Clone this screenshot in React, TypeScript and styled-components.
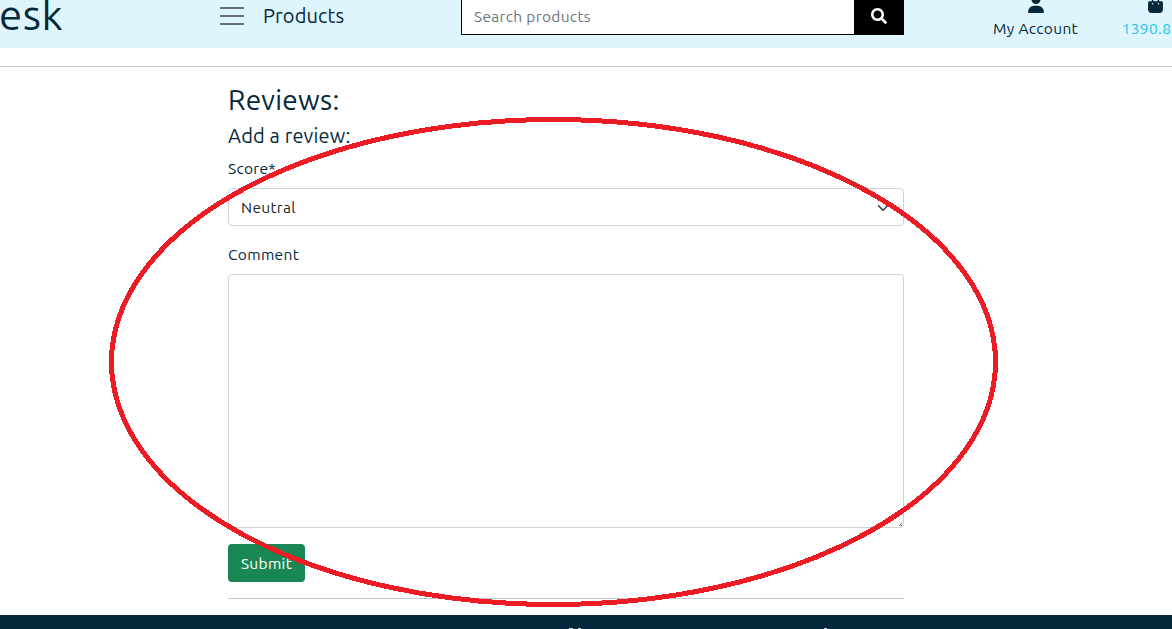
import React from "react";
import styled, { createGlobalStyle } from "styled-components";
import { FaSearch } from "react-icons/fa";
import { FaBagShopping, FaUser } from "react-icons/fa6";

const navy = "#05283b";

const GlobalStyle = createGlobalStyle`
  *, *::before, *::after { box-sizing: border-box; }
  html, body { margin: 0; height: 100%; overflow: hidden; }
  body {
    background: #fff;
    color: ${navy};
    font-family: Ubuntu, "Noto Sans", "Open Sans", sans-serif;
    font-size: 15.5px;
    line-height: 24px;
    letter-spacing: 0.32px;
  }
`;

const Page = styled.div`
  position: relative;
  display: flex;
  flex-direction: column;
  width: 1172px;
  height: 629px;
  overflow: hidden;
`;

const Header = styled.header`
  display: flex;
  align-items: flex-end;
  flex: none;
  height: 48px;
  margin-bottom: 18px;
  background: #dff5fe;
  white-space: nowrap;
`;

const Logo = styled.div`
  flex: none;
  width: 221px;
  height: 57px;
  margin-left: -1px;
  line-height: 48px;
  font-size: 42px;
  letter-spacing: 0.6px;
`;

const MenuButton = styled.div`
  display: flex;
  flex: none;
  align-items: center;
  gap: 19px;
  width: 241px;
  height: 48px;
  padding-bottom: 16px;
  font-size: 20px;
  letter-spacing: 0.15px;
`;

const Search = styled.div`
  display: flex;
  flex: none;
  width: 443px;
  height: 38px;
  margin-bottom: 13px;
`;

const SearchField = styled.div`
  flex: 1;
  padding: 7px 12px 5px;
  border: 1px solid #000;
  border-right: 0;
  background: #fff;
  color: #6c757d;
`;

const SearchButton = styled.div`
  display: flex;
  align-items: center;
  justify-content: center;
  width: 50px;
  background: #000;
  color: #fff;
`;

const HeaderLink = styled.div<{ $left: number; $width: number; $color?: string }>`
  display: flex;
  flex: none;
  flex-direction: column;
  align-items: center;
  gap: 4px;
  width: ${(p) => p.$width}px;
  margin: 0 0 7px ${(p) => p.$left}px;
  color: ${(p) => p.$color ?? navy};
  svg { color: ${navy}; }
`;

const Price = styled.span`
  margin-right: 9px;
`;

const Rule = styled.hr`
  flex: none;
  width: 100%;
  height: 1px;
  margin: 0;
  border: 0;
  background: #c0c9ce;
`;

const Main = styled.main`
  display: flex;
  flex-direction: column;
  flex: none;
  width: 676px;
  height: 548px;
  margin-left: 228px;
  padding-top: 16px;
`;

const Title = styled.h2`
  margin: 0 0 7px;
  font-size: 28px;
  font-weight: 400;
  line-height: 34px;
  letter-spacing: 0.25px;
`;

const Subtitle = styled.h3`
  margin: 0 0 8px;
  font-size: 20px;
  font-weight: 400;
  line-height: 24px;
  letter-spacing: 0.15px;
`;

const Label = styled.label`
  margin-bottom: 7px;
  padding-top: 1px;
`;

const Select = styled.div`
  display: flex;
  align-items: center;
  justify-content: space-between;
  height: 38px;
  margin-bottom: 16px;
  padding: 1px 13px 0 12px;
  border: 1px solid #ced4da;
  border-radius: 4px;
  color: #212529;
`;

const CommentField = styled.div`
  position: relative;
  height: 254px;
  margin-bottom: 16px;
`;

const CommentBox = styled.textarea`
  display: block;
  width: 100%;
  height: 100%;
  margin: 0;
  border: 1px solid #ced4da;
  border-radius: 4px;
  resize: none;
  outline: none;
`;

const Grip = styled.svg`
  position: absolute;
  right: 2px;
  bottom: 2px;
`;

const Submit = styled.button`
  width: 77px;
  height: 38px;
  margin: 0 0 16px;
  padding: 2px 0 0;
  border: 0;
  border-radius: 4px;
  background: #198754;
  color: #fff;
  font: inherit;
  letter-spacing: inherit;
`;

const Footer = styled.footer`
  display: flex;
  align-items: flex-end;
  flex: 1;
  background: ${navy};
`;

const FooterTip = styled.span<{ $left: number; $width: number }>`
  width: ${(p) => p.$width}px;
  height: 1px;
  margin-left: ${(p) => p.$left}px;
  background: #c9d1d6;
`;

const Annotation = styled.svg`
  position: absolute;
  inset: 0;
  pointer-events: none;
`;

export default function App() {
  return (
    <Page>
      <GlobalStyle />
      <Header>
        <Logo>esk</Logo>
        <MenuButton>
          <svg width="24" height="18" viewBox="0 0 24 18" fill="#656f75">
            <rect width="24" height="2" rx=".5" />
            <rect y="8" width="24" height="2" rx=".5" />
            <rect y="16" width="24" height="2" rx=".5" />
          </svg>
          <span>Products</span>
        </MenuButton>
        <Search>
          <SearchField>Search products</SearchField>
          <SearchButton><FaSearch size={16} /></SearchButton>
        </Search>
        <HeaderLink $left={89} $width={85}>
          <FaUser size={18} />
          <span>My Account</span>
        </HeaderLink>
        <HeaderLink $left={44} $width={67} $color="#1fc3ee">
          <FaBagShopping size={17} />
          <Price>1390.80</Price>
        </HeaderLink>
      </Header>
      <Rule />
      <Main>
        <Title>Reviews:</Title>
        <Subtitle>Add a review:</Subtitle>
        <Label>Score*</Label>
        <Select>
          Neutral
          <svg width="14" height="12" viewBox="0 0 16 16" fill="none" stroke="#343a40" strokeWidth="2" strokeLinecap="round" strokeLinejoin="round">
            <path d="m2 5 6 6 6-6" />
          </svg>
        </Select>
        <Label>Comment</Label>
        <CommentField>
          <CommentBox />
          <Grip width="3" height="3" viewBox="0 0 3 3" fill="#5a5f64" shapeRendering="crispEdges">
            <path d="M2 0h1v1H2zM1 1h1v1H1zM0 2h1v1H0zM2 2h1v1H2z" />
          </Grip>
        </CommentField>
        <Submit>Submit</Submit>
        <Rule />
      </Main>
      <Footer>
        <FooterTip $left={569} $width={4} />
        <FooterTip $left={5} $width={3} />
        <FooterTip $left={243} $width={3} />
      </Footer>
      <Annotation width="1172" height="629" viewBox="0 0 1172 629" fill="none">
        <ellipse cx="553.5" cy="362" rx="442" ry="242.5" stroke="#ed1c24" strokeWidth="5" shapeRendering="crispEdges" />
      </Annotation>
    </Page>
  );
}
